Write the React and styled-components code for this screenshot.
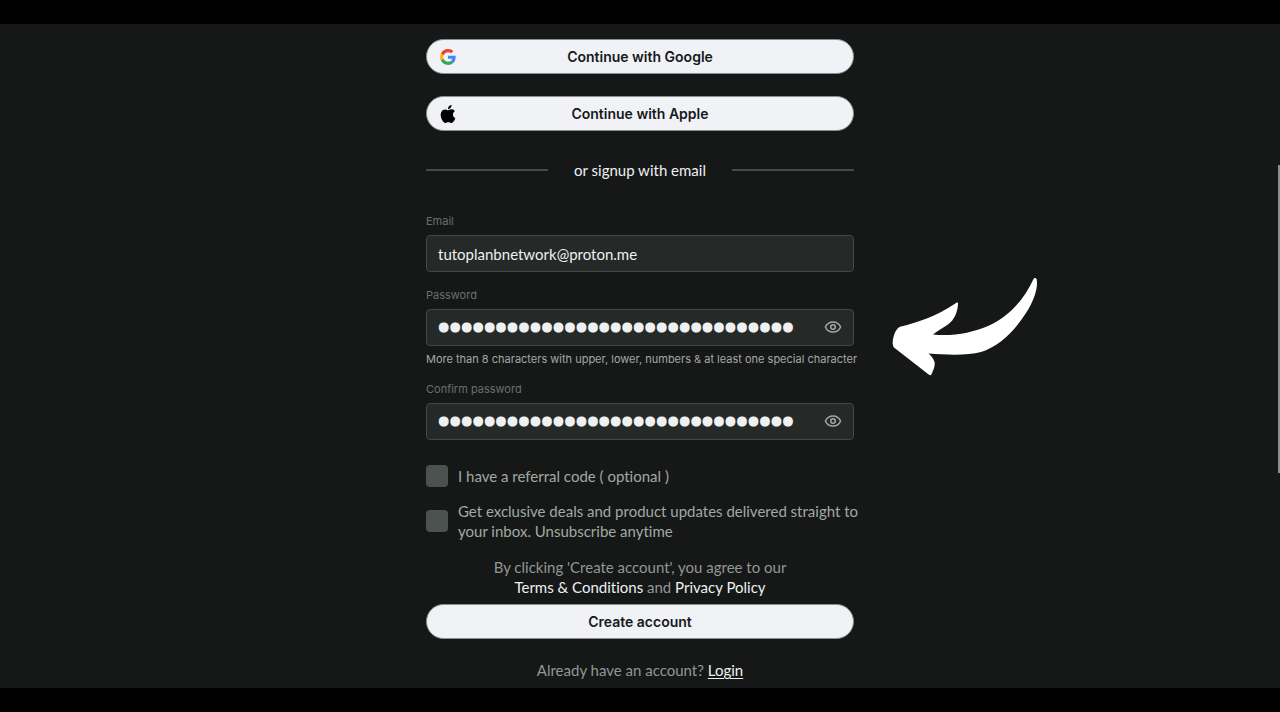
import React, { useState } from "react";
import styled, { createGlobalStyle } from "styled-components";

const GlobalStyle = createGlobalStyle`
  *, *::before, *::after { box-sizing: border-box; }
  body {
    margin: 0;
    background: #000;
    color: #eef0f2;
    font-family: Lato, "Liberation Sans", sans-serif;
    font-size: 15px;
    line-height: 20px;
    font-variant-ligatures: none;
  }
`;

const Page = styled.div`
  position: relative;
  min-height: 100vh;
  padding: 24px 0;
  display: flex;
`;

const Screen = styled.main`
  flex: 1;
  background: #161817;
  display: flex;
  justify-content: center;
  padding: 15px 16px 8px;
`;

const Form = styled.form`
  position: relative;
  width: 100%;
  max-width: 428px;
  display: flex;
  flex-direction: column;
`;

const PillButton = styled.button`
  display: grid;
  grid-template-columns: 18px 1fr 18px;
  align-items: center;
  justify-items: center;
  height: 35px;
  padding: 0 12px;
  border: 1px solid #8b8e8e;
  border-radius: 18px;
  background: #f1f2f6;
  color: #15191b;
  font-family: Inter, "Liberation Sans", sans-serif;
  font-size: 14px;
  font-weight: 600;
  line-height: 20px;
  cursor: pointer;
  & > span { grid-column: 2; }
`;

const Providers = styled.div`
  display: flex;
  flex-direction: column;
  gap: 22px;
`;

const Divider = styled.div`
  display: flex;
  align-items: center;
  gap: 26px;
  margin: 29px 0 33px;
  &::before, &::after {
    content: "";
    flex: 1;
    height: 2px;
    background: #464a49;
  }
`;

const Fields = styled.div`
  display: flex;
  flex-direction: column;
  gap: 15px;
`;

const Field = styled.div`
  display: flex;
  flex-direction: column;
  font-family: Inter, "Liberation Sans", sans-serif;
  font-size: 11px;
  line-height: 16px;
`;

const Label = styled.label`
  color: #6a6f6d;
  margin-bottom: 6px;
`;

const InputBox = styled.div`
  display: flex;
  align-items: center;
  height: 37px;
  padding: 0 11px;
  border: 1px solid #424946;
  border-radius: 4px;
  background: #252927;
`;

const Input = styled.input`
  flex: 1;
  min-width: 0;
  height: 100%;
  padding: 0;
  border: 0;
  outline: 0;
  background: transparent;
  color: #eef0f2;
  font-family: Lato, "Liberation Sans", sans-serif;
  font-size: 15px;
  &[type="password"] {
    font-family: Roboto, sans-serif;
    font-size: 34px;
    -webkit-text-stroke: 3px #eef0f2;
  }
`;

const EyeButton = styled.button`
  display: flex;
  padding: 0;
  margin-left: 12px;
  border: 0;
  background: none;
  color: #a3a8a5;
  cursor: pointer;
`;

const Hint = styled.p`
  margin: 6px 0 0;
  line-height: 14px;
  color: #a3a8a5;
  white-space: nowrap;
`;

const Checks = styled.div`
  display: flex;
  flex-direction: column;
  gap: 14px;
  margin-top: 25px;
`;

const CheckRow = styled.label`
  display: flex;
  align-items: center;
  gap: 10px;
  color: #a3a8a5;
  white-space: nowrap;
`;

const Checkbox = styled.input`
  appearance: none;
  flex: none;
  width: 22px;
  height: 22px;
  margin: 0;
  border-radius: 4px;
  background: #4c5250;
  &:checked { background: #eef0f2; }
`;

const Note = styled.p`
  margin: ${(p) => p.$top}px 0 0;
  text-align: center;
  color: #929795;
`;

const TextLink = styled.a`
  color: #eef0f2;
  text-decoration: ${(p) => (p.$underlined ? "underline" : "none")};
  text-underline-offset: 2px;
`;

const Submit = styled(PillButton)`
  margin-top: 7px;
`;

const Arrow = styled.svg`
  position: absolute;
  left: 466px;
  top: 238px;
  width: 148px;
  height: 100px;
`;

const ScrollThumb = styled.div`
  position: absolute;
  right: 0;
  top: 165px;
  width: 2px;
  height: 308px;
  background: #8e908f;
`;

const GoogleLogo = () => (
  <svg width="16" height="16" viewBox="0 0 48 48" aria-hidden="true">
    <path fill="#EA4335" d="M24 9.5c3.54 0 6.71 1.22 9.21 3.6l6.85-6.85C35.9 2.38 30.47 0 24 0 14.62 0 6.51 5.38 2.56 13.22l7.98 6.19C12.43 13.72 17.74 9.5 24 9.5z" />
    <path fill="#4285F4" d="M46.98 24.55c0-1.57-.15-3.09-.38-4.55H24v9.02h12.94c-.58 2.96-2.26 5.48-4.78 7.18l7.73 6c4.51-4.18 7.09-10.36 7.09-17.65z" />
    <path fill="#FBBC05" d="M10.53 28.59c-.48-1.45-.76-2.99-.76-4.59s.27-3.14.76-4.59l-7.98-6.19C.92 16.46 0 20.12 0 24c0 3.88.92 7.54 2.56 10.78l7.97-6.19z" />
    <path fill="#34A853" d="M24 48c6.48 0 11.93-2.13 15.89-5.81l-7.73-6c-2.15 1.45-4.92 2.3-8.16 2.3-6.26 0-11.57-4.22-13.47-9.91l-7.98 6.19C6.51 42.62 14.62 48 24 48z" />
  </svg>
);

const AppleLogo = () => (
  <svg width="18" height="18" viewBox="0 0 24 24" aria-hidden="true">
    <path fill="#000" d="M12.152 6.896c-.948 0-2.415-1.078-3.96-1.04-2.04.027-3.91 1.183-4.961 3.014-2.117 3.675-.546 9.103 1.519 12.09 1.013 1.454 2.208 3.09 3.792 3.039 1.52-.065 2.09-.987 3.935-.987 1.831 0 2.35.987 3.96.948 1.637-.026 2.676-1.48 3.676-2.948 1.156-1.688 1.636-3.325 1.662-3.415-.039-.013-3.182-1.221-3.22-4.857-.026-3.04 2.48-4.494 2.597-4.559-1.429-2.09-3.623-2.324-4.39-2.376-2-.156-3.675 1.09-4.61 1.09zM15.53 3.83c.843-1.012 1.4-2.427 1.245-3.83-1.207.052-2.662.805-3.532 1.818-.78.896-1.454 2.338-1.273 3.714 1.338.104 2.715-.688 3.559-1.701" />
  </svg>
);

const EyeIcon = () => (
  <svg width="18" height="18" viewBox="0 0 18 18" fill="none" stroke="currentColor" strokeWidth="1.5" aria-hidden="true">
    <path d="M1.4 8C2.9 4.7 5.6 2.9 9 2.9S15.1 4.7 16.6 8C15.1 11.3 12.4 13.1 9 13.1S2.9 11.3 1.4 8Z" strokeLinejoin="round" />
    <circle cx="9" cy="8" r="2.3" />
  </svg>
);

function PasswordField({ id, label, hint }) {
  const [visible, setVisible] = useState(false);
  return (
    <Field>
      <Label htmlFor={id}>{label}</Label>
      <InputBox>
        <Input
          id={id}
          type={visible ? "text" : "password"}
          defaultValue={"x".repeat(31)}
          autoComplete="new-password"
        />
        <EyeButton type="button" aria-label="Show password" onClick={() => setVisible(!visible)}>
          <EyeIcon />
        </EyeButton>
      </InputBox>
      {hint && <Hint>{hint}</Hint>}
    </Field>
  );
}

export default function App() {
  return (
    <>
      <GlobalStyle />
      <Page>
        <Screen>
          <Form onSubmit={(e) => e.preventDefault()}>
            <Providers>
              <PillButton type="button">
                <GoogleLogo />
                <span>Continue with Google</span>
              </PillButton>
              <PillButton type="button">
                <AppleLogo />
                <span>Continue with Apple</span>
              </PillButton>
            </Providers>
            <Divider>or signup with email</Divider>
            <Fields>
              <Field>
                <Label htmlFor="email">Email</Label>
                <InputBox>
                  <Input id="email" type="email" defaultValue="tutoplanbnetwork@proton.me" />
                </InputBox>
              </Field>
              <PasswordField
                id="password"
                label="Password"
                hint="More than 8 characters with upper, lower, numbers & at least one special character"
              />
              <PasswordField id="confirm" label="Confirm password" />
            </Fields>
            <Checks>
              <CheckRow>
                <Checkbox type="checkbox" />
                <span>I have a referral code ( optional )</span>
              </CheckRow>
              <CheckRow>
                <Checkbox type="checkbox" />
                <span>
                  Get exclusive deals and product updates delivered straight to
                  <br />
                  your inbox. Unsubscribe anytime
                </span>
              </CheckRow>
            </Checks>
            <Note $top={16}>
              By clicking 'Create account', you agree to our
              <br />
              <TextLink href="#terms">Terms &amp; Conditions</TextLink> and{" "}
              <TextLink href="#privacy">Privacy Policy</TextLink>
            </Note>
            <Submit type="submit">
              <span>Create account</span>
            </Submit>
            <Note $top={21}>
              Already have an account?{" "}
              <TextLink $underlined href="#login">Login</TextLink>
            </Note>
            <Arrow viewBox="0 0 148 100" aria-hidden="true">
              <path
                fill="#fff"
                d="M141.5 2C142.5 .6 144.2 .8 144.700 2.6C146 10 143 22 134 36C122 55 106 70 89 75C76 78.5 56 78 36.5 76.5C39 78.5 41.5 81.5 42.5 85C43.5 89 41 94 39 98C38 98.5 37 98 36 97L2 70.5C.3 68.5 .3 64 1.5 60C2.5 56 4.5 51.5 8 49.8C24 46 45 39 63 26.8C64.5 25.5 66 25 66 26.5C66 34 62.5 43 56 47.5C51 51 45 54 41 57.5C60 59.5 80 56 96 49C116 40.5 132 23 141.5 2Z"
              />
            </Arrow>
          </Form>
        </Screen>
        <ScrollThumb />
      </Page>
    </>
  );
}
